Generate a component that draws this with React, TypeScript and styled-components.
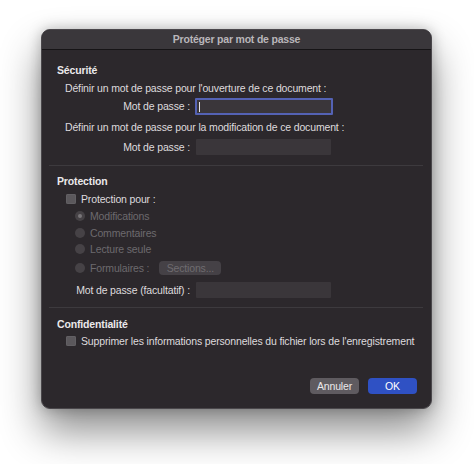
import React from "react";
import styled, { createGlobalStyle } from "styled-components";

const Global = createGlobalStyle`
  html, body { margin: 0; padding: 0; background: #ffffff; }
  body { font-family: "Liberation Sans", Arial, sans-serif; -webkit-font-smoothing: antialiased; }
`;

const Page = styled.div`
  width: 474px;
  height: 464px;
  padding: 29px 0 0 41px;
  box-sizing: border-box;
`;

const Window = styled.div`
  width: 391px;
  height: 380px;
  box-sizing: border-box;
  background: #2c282c;
  border-radius: 9px;
  border: 1px solid #4a474b;
  box-shadow: 0 22px 40px rgba(0, 0, 0, 0.45), 0 0 14px rgba(0, 0, 0, 0.25);
  overflow: hidden;
  display: flex;
  flex-direction: column;
  font-size: 10.5px;
  letter-spacing: -0.15px;
  color: #dedbde;
`;

const TitleBar = styled.div`
  height: 19px;
  line-height: 19px;
  background: #3a373b;
  border-bottom: 1px solid #161416;
  text-align: center;
  font-weight: 700;
  font-size: 10.5px;
  letter-spacing: -0.2px;
  color: #b9b6ba;
  flex-shrink: 0;
`;

const Section = styled.div<{ $top: number }>`
  padding: ${({ $top }) => $top}px 15px 0 15px;
  display: flex;
  flex-direction: column;
`;

const Heading = styled.div`
  height: 14px;
  line-height: 14px;
  font-weight: 700;
  color: #ebe9eb;
`;

const Line = styled.div<{ $mt: number; $indent?: number; $h?: number }>`
  margin-top: ${({ $mt }) => $mt}px;
  padding-left: ${({ $indent = 0 }) => $indent}px;
  height: ${({ $h = 14 }) => $h}px;
  line-height: ${({ $h = 14 }) => $h}px;
  display: flex;
  align-items: center;
  white-space: nowrap;
`;

const Label = styled.span`
  width: 133px;
  text-align: right;
  flex-shrink: 0;
`;

const Input = styled.div<{ $focus?: boolean; $h: number }>`
  margin-left: ${({ $focus }) => ($focus ? 5 : 6)}px;
  width: ${({ $focus }) => ($focus ? 134 : 135)}px;
  height: ${({ $h }) => $h}px;
  background: #3a363a;
  border: ${({ $focus }) => ($focus ? "2px solid #5462b4" : "0")};
  border-radius: 1px;
  box-sizing: content-box;
  position: relative;
`;

const Caret = styled.span`
  position: absolute;
  left: 2px;
  top: 2px;
  width: 1px;
  height: 10px;
  background: #e6e4e6;
`;

const Separator = styled.div<{ $mt: number }>`
  margin: ${({ $mt }) => $mt}px 8px 0 7px;
  height: 1px;
  background: #3d3a3e;
  flex-shrink: 0;
`;

const Check = styled.span`
  width: 10px;
  height: 10px;
  border-radius: 2px;
  background: #5b585c;
  box-shadow: inset 0 0 0 0.5px #6b686c;
  margin-right: 5px;
  flex-shrink: 0;
`;

const Radio = styled.span<{ $on?: boolean }>`
  width: 10px;
  height: 10px;
  border-radius: 50%;
  background: #464246;
  margin-right: 5px;
  flex-shrink: 0;
  display: flex;
  align-items: center;
  justify-content: center;
  &::after {
    content: "";
    display: ${({ $on }) => ($on ? "block" : "none")};
    width: 4px;
    height: 4px;
    border-radius: 50%;
    background: #7a767a;
  }
`;

const Dim = styled.span`
  color: #6d6a6e;
`;

const SmallButton = styled.span`
  margin-left: 10px;
  width: 62px;
  height: 14px;
  line-height: 14px;
  border-radius: 4px;
  background: #454146;
  color: #6f6c70;
  text-align: center;
`;

const Footer = styled.div`
  margin-top: auto;
  padding: 0 14px 14px 0;
  display: flex;
  justify-content: flex-end;
  gap: 9px;
`;

const Button = styled.span<{ $primary?: boolean }>`
  width: 49px;
  height: 16px;
  line-height: 16px;
  border-radius: 4px;
  text-align: center;
  background: ${({ $primary }) => ($primary ? "#2f51c4" : "#5f5b60")};
  color: ${({ $primary }) => ($primary ? "#ffffff" : "#ebe9eb")};
`;

export default function App() {
  return (
    <Page>
      <Global />
      <Window>
        <TitleBar>Protéger par mot de passe</TitleBar>

        <Section $top={13}>
          <Heading>Sécurité</Heading>
          <Line $mt={4} $indent={8}>Définir un mot de passe pour l'ouverture de ce document :</Line>
          <Line $mt={3} $h={17}>
            <Label>Mot de passe :</Label>
            <Input $focus $h={13}>
              <Caret />
            </Input>
          </Line>
          <Line $mt={5} $indent={8}>Définir un mot de passe pour la modification de ce document :</Line>
          <Line $mt={5} $h={16}>
            <Label>Mot de passe :</Label>
            <Input $h={16} />
          </Line>
        </Section>
        <Separator $mt={10} />

        <Section $top={8}>
          <Heading>Protection</Heading>
          <Line $mt={4} $indent={9}>
            <Check />
            Protection pour :
          </Line>
          <Line $mt={3} $indent={18}>
            <Radio $on />
            <Dim>Modifications</Dim>
          </Line>
          <Line $mt={3} $indent={18}>
            <Radio />
            <Dim>Commentaires</Dim>
          </Line>
          <Line $mt={2} $indent={18}>
            <Radio />
            <Dim>Lecture seule</Dim>
          </Line>
          <Line $mt={5} $indent={18}>
            <Radio />
            <Dim>Formulaires :</Dim>
            <SmallButton>Sections...</SmallButton>
          </Line>
          <Line $mt={7} $h={16}>
            <Label>Mot de passe (facultatif) :</Label>
            <Input $h={16} />
          </Line>
        </Section>
        <Separator $mt={9} />

        <Section $top={9}>
          <Heading>Confidentialité</Heading>
          <Line $mt={3} $indent={9}>
            <Check />
            Supprimer les informations personnelles du fichier lors de l'enregistrement
          </Line>
        </Section>

        <Footer>
          <Button>Annuler</Button>
          <Button $primary>OK</Button>
        </Footer>
      </Window>
    </Page>
  );
}
